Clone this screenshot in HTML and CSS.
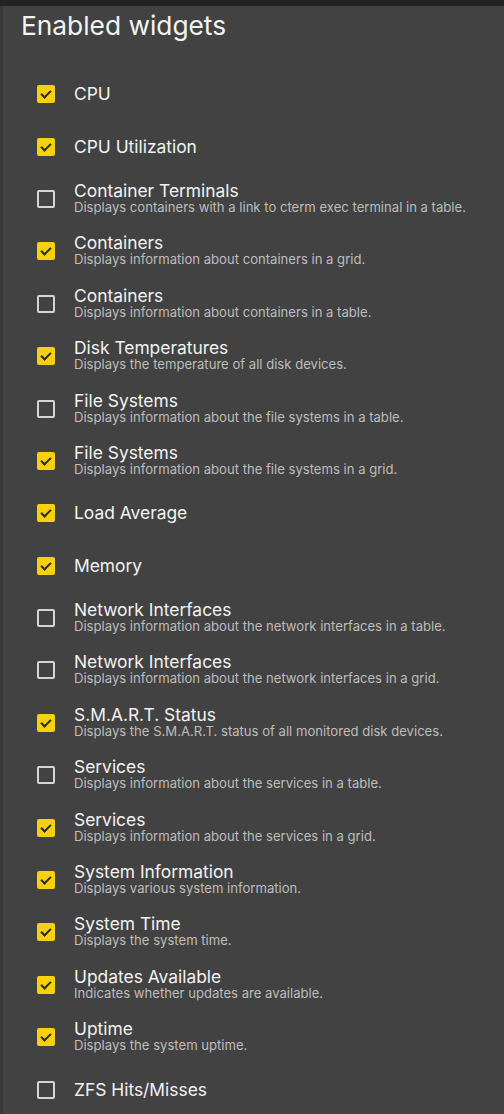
FILE: index.html
```html
<!DOCTYPE html>
<html>
<head>
<meta charset="utf-8">
<link rel="stylesheet" href="styles.css">
</head>
<body>
<div class="topbar"></div>
<div class="panel">
  <h1 class="heading">Enabled widgets</h1>
  <ul class="list">
    <li class="row"><span class="box on"></span><div class="text"><div class="title">CPU</div></div></li>
    <li class="row"><span class="box on"></span><div class="text"><div class="title">CPU Utilization</div></div></li>
    <li class="row"><span class="box"></span><div class="text two"><div class="title">Container Terminals</div><div class="desc">Displays containers with a link to cterm exec terminal in a table.</div></div></li>
    <li class="row"><span class="box on"></span><div class="text two"><div class="title">Containers</div><div class="desc">Displays information about containers in a grid.</div></div></li>
    <li class="row"><span class="box"></span><div class="text two"><div class="title">Containers</div><div class="desc">Displays information about containers in a table.</div></div></li>
    <li class="row"><span class="box on"></span><div class="text two"><div class="title">Disk Temperatures</div><div class="desc">Displays the temperature of all disk devices.</div></div></li>
    <li class="row"><span class="box"></span><div class="text two"><div class="title">File Systems</div><div class="desc">Displays information about the file systems in a table.</div></div></li>
    <li class="row"><span class="box on"></span><div class="text two"><div class="title">File Systems</div><div class="desc">Displays information about the file systems in a grid.</div></div></li>
    <li class="row"><span class="box on"></span><div class="text"><div class="title">Load Average</div></div></li>
    <li class="row"><span class="box on"></span><div class="text"><div class="title">Memory</div></div></li>
    <li class="row"><span class="box"></span><div class="text two"><div class="title">Network Interfaces</div><div class="desc">Displays information about the network interfaces in a table.</div></div></li>
    <li class="row"><span class="box"></span><div class="text two"><div class="title">Network Interfaces</div><div class="desc">Displays information about the network interfaces in a grid.</div></div></li>
    <li class="row"><span class="box on"></span><div class="text two"><div class="title">S.M.A.R.T. Status</div><div class="desc">Displays the S.M.A.R.T. status of all monitored disk devices.</div></div></li>
    <li class="row"><span class="box"></span><div class="text two"><div class="title">Services</div><div class="desc">Displays information about the services in a table.</div></div></li>
    <li class="row"><span class="box on"></span><div class="text two"><div class="title">Services</div><div class="desc">Displays information about the services in a grid.</div></div></li>
    <li class="row"><span class="box on"></span><div class="text two"><div class="title">System Information</div><div class="desc">Displays various system information.</div></div></li>
    <li class="row"><span class="box on"></span><div class="text two"><div class="title">System Time</div><div class="desc">Displays the system time.</div></div></li>
    <li class="row"><span class="box on"></span><div class="text two"><div class="title">Updates Available</div><div class="desc">Indicates whether updates are available.</div></div></li>
    <li class="row"><span class="box on"></span><div class="text two"><div class="title">Uptime</div><div class="desc">Displays the system uptime.</div></div></li>
    <li class="row"><span class="box"></span><div class="text"><div class="title">ZFS Hits/Misses</div></div></li>
  </ul>
</div>
</body>
</html>
```
FILE: styles.css
```css
html, body {
  margin: 0;
  padding: 0;
  background: #424242;
  font-family: Inter, "Noto Sans", sans-serif;
  height: 100%;
  overflow: hidden;
}
.topbar {
  height: 6px;
  background: #222222;
}
.panel {
  border-left: 3px solid #383838;
  min-height: 1108px;
  box-sizing: border-box;
}
.heading {
  margin: 0;
  padding: 5px 0 0 18px;
  font-size: 26.3px;
  font-weight: 400;
  line-height: 30px;
  color: #f4f4f4;
}
.list {
  list-style: none;
  margin: 0;
  padding: 27px 0 0 34px;
}
.row {
  height: 52.4px;
  display: flex;
  align-items: center;
  gap: 19px;
}
.box {
  flex: none;
  width: 18px;
  height: 18px;
  box-sizing: border-box;
  border: 2px solid #d4d4d4;
  border-radius: 2px;
  position: relative;
}
.box.on {
  background: #f7d10a;
  border-color: #f7d10a;
}
.box.on::after {
  content: "";
  position: absolute;
  left: 4px;
  top: 1px;
  width: 4px;
  height: 8px;
  border-right: 2px solid #2b2b2b;
  border-bottom: 2px solid #2b2b2b;
  transform: rotate(45deg);
}
.text {
  display: flex;
  flex-direction: column;
}
.text.two {
  margin-bottom: 2px;
}
.title {
  font-size: 17.4px;
  line-height: 20px;
  color: #f2f2f2;
}
.two .title {
  line-height: 19px;
}
.desc {
  font-size: 13.1px;
  line-height: 15px;
  color: #bdbdbd;
}
```
